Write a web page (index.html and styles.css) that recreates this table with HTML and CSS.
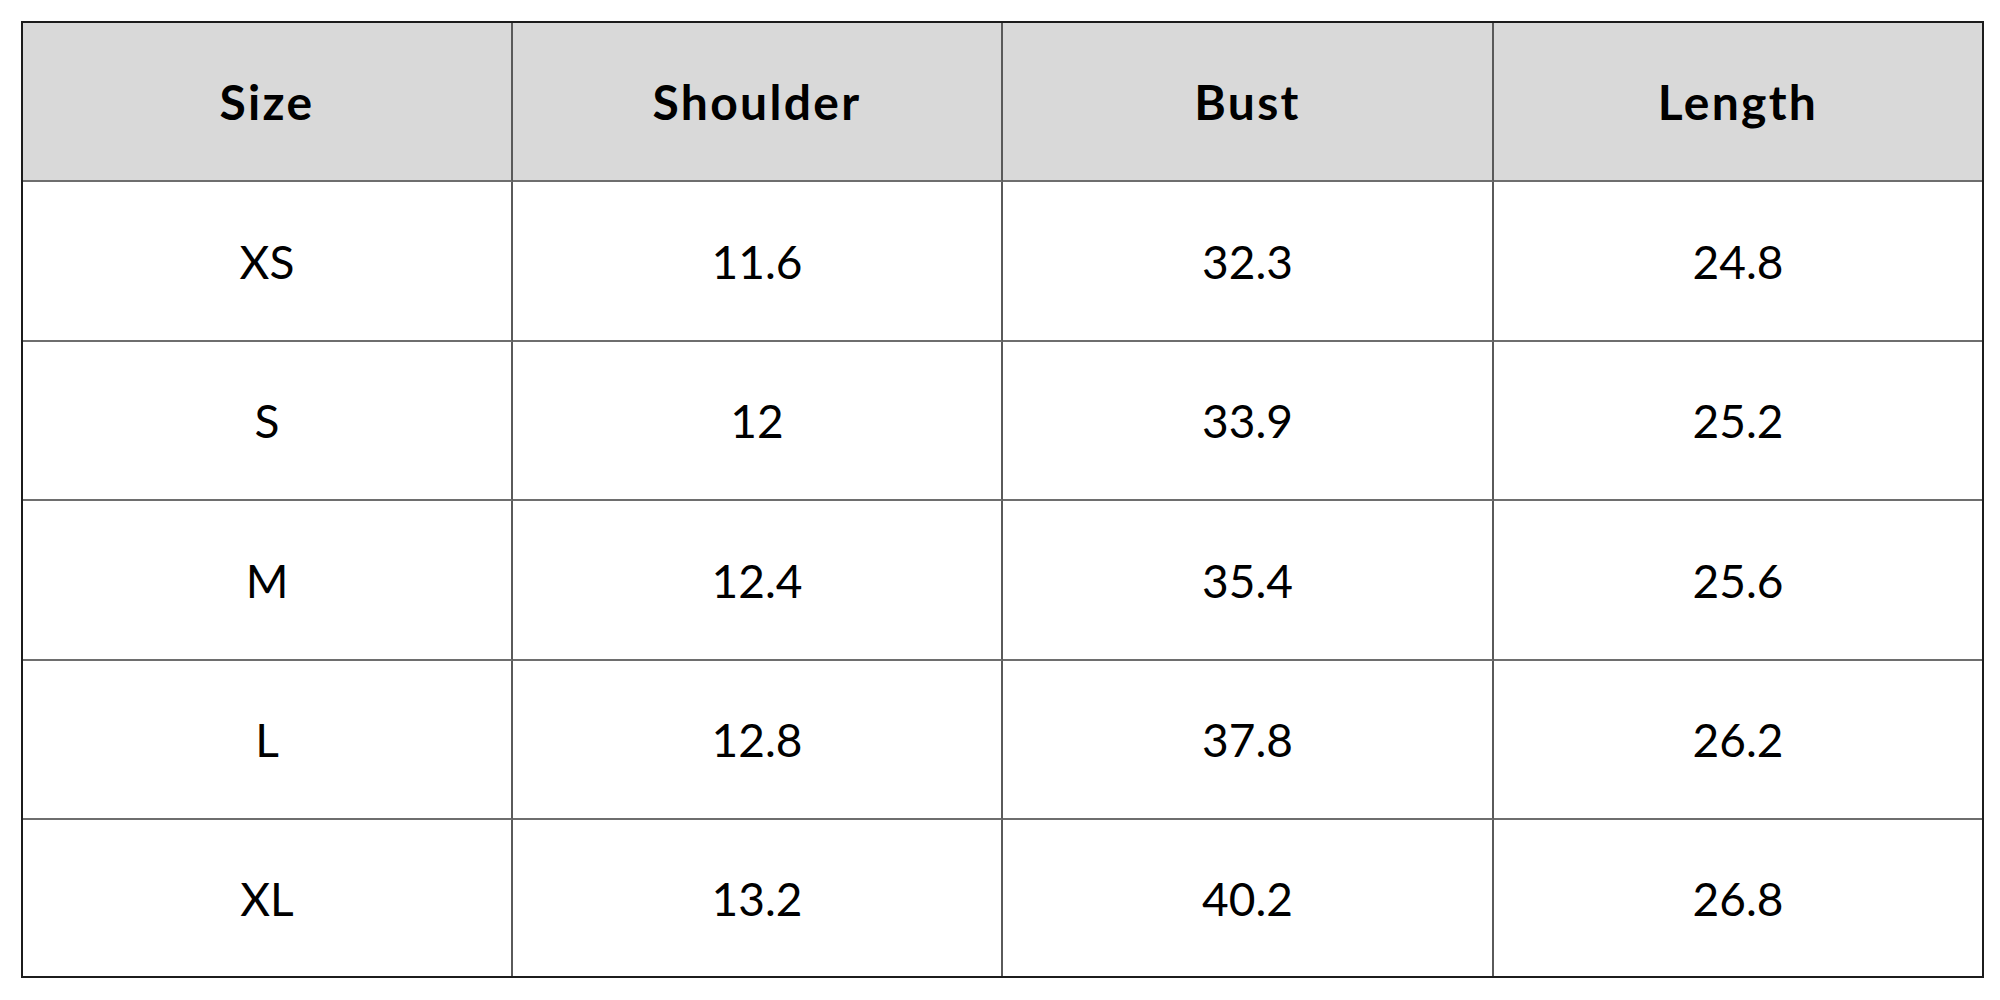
FILE: index.html
```html
<!DOCTYPE html>
<html>
<head>
<meta charset="utf-8">
<link rel="stylesheet" href="styles.css">
</head>
<body>
<div class="page">
  <div class="chart">
    <div class="cell head">Size</div>
    <div class="cell head">Shoulder</div>
    <div class="cell head">Bust</div>
    <div class="cell head last-col">Length</div>

    <div class="cell">XS</div>
    <div class="cell">11.6</div>
    <div class="cell">32.3</div>
    <div class="cell last-col">24.8</div>

    <div class="cell">S</div>
    <div class="cell">12</div>
    <div class="cell">33.9</div>
    <div class="cell last-col">25.2</div>

    <div class="cell">M</div>
    <div class="cell">12.4</div>
    <div class="cell">35.4</div>
    <div class="cell last-col">25.6</div>

    <div class="cell">L</div>
    <div class="cell">12.8</div>
    <div class="cell">37.8</div>
    <div class="cell last-col">26.2</div>

    <div class="cell last-row">XL</div>
    <div class="cell last-row">13.2</div>
    <div class="cell last-row">40.2</div>
    <div class="cell last-row last-col">26.8</div>
  </div>
</div>
</body>
</html>
```

FILE: styles.css
```css
html, body {
  margin: 0;
  padding: 0;
  background: #ffffff;
}

.page {
  padding: 21px 16px 22px 21px;
}

.chart {
  width: 1963px;
  height: 957px;
  box-sizing: border-box;
  border: 2px solid #1c1c1c;
  display: grid;
  grid-template-columns: 490px 490px 491px 1fr;
  grid-template-rows: 159px 160px 159px 160px 159px 1fr;
  font-family: Lato, "Liberation Sans", sans-serif;
  color: #000;
}

.cell {
  display: flex;
  align-items: center;
  justify-content: center;
  border-right: 2px solid #5a5a5a;
  border-bottom: 2px solid #6e6e6e;
  font-size: 46px;
  font-weight: 400;
}

.head {
  background: #d9d9d9;
  font-weight: 700;
  font-size: 48px;
  letter-spacing: 2.3px;
}

.last-col {
  border-right: none;
}

.last-row {
  border-bottom: none;
}
```
